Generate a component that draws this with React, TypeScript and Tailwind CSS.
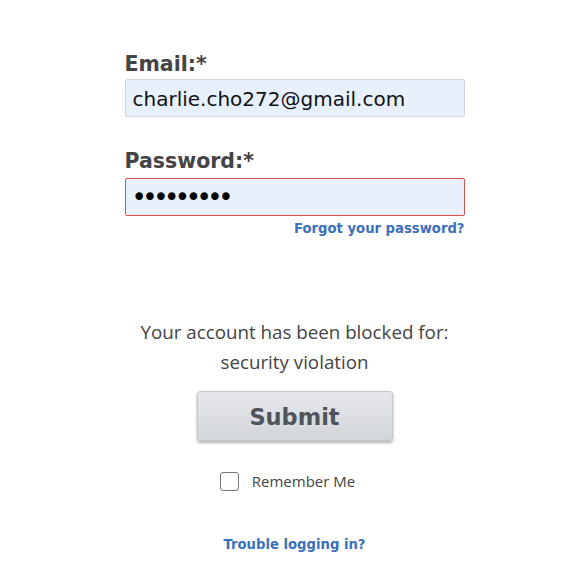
export default function App() {
    return (
        <div className="min-h-[586px] w-[565px] bg-white pl-[24px]">
            <div className="mx-auto flex w-[340px] flex-col pt-[51px] font-['DejaVu_Sans',sans-serif]">
                <label className="text-[20.5px] font-bold leading-[26px] text-[#444]">Email:*</label>
                <div className="mt-[2px] flex h-[38px] items-center rounded-[2px] border border-[#cfd6de] bg-[#e8f0fe] px-[7px] pt-[2px] text-[20px] text-[#111]">
                    charlie.cho272@gmail.com
                </div>
                <label className="mt-[31px] text-[20.5px] font-bold leading-[26px] text-[#444]">Password:*</label>
                <div className="mt-[4px] flex h-[38px] items-center overflow-hidden rounded-[2px] border border-[#d9534f] bg-[#e8f0fe] px-[6px] text-[26px] leading-none tracking-[-4.5px] text-black">
                    •••••••••
                </div>
                <a className="mt-[4px] self-end text-[13.2px] font-bold leading-[18px] text-[#3b70bd]">
                    Forgot your password?
                </a>
            </div>
            <div className="mt-[79px] flex flex-col items-center">
                <p className="text-center font-['Open_Sans',sans-serif] text-[18.75px] leading-[30px] text-[#444]">
                    Your account has been blocked for:
                    <br />
                    security violation
                </p>
                <button className="mt-[14px] h-[50px] w-[196px] rounded-[3px] border border-[#c4c7ca] bg-gradient-to-b from-[#e6e8eb] to-[#d3d6d9] pt-[3px] font-['DejaVu_Sans',sans-serif] text-[22.5px] font-bold text-[#4f545a] shadow-[0_2px_3px_rgba(0,0,0,0.3)]">
                    Submit
                </button>
                <label className="mt-[29px] mr-[14px] flex items-center gap-[13px] font-['Open_Sans',sans-serif] text-[15px] text-[#444]">
                    <span className="h-[19px] w-[19px] rounded-[3px] border border-[#777] bg-white" />
                    Remember Me
                </label>
                <a className="mt-[42px] font-['DejaVu_Sans',sans-serif] text-[13.2px] font-bold text-[#3b70bd]">
                    Trouble logging in?
                </a>
            </div>
        </div>
    );
}
